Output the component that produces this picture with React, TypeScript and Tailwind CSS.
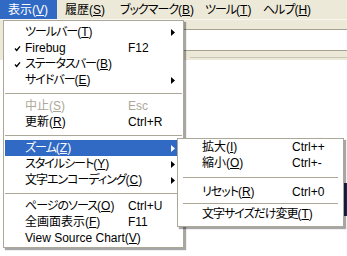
import React from 'react'

type Entry =
  | { kind: 'sep'; h?: string }
  | {
      kind: 'item'
      label: string
      mn: string
      shortcut?: string
      check?: boolean
      arrow?: boolean
      disabled?: boolean
      active?: boolean
    }

const font = { fontFamily: "'Liberation Sans','Noto Sans CJK JP',sans-serif", fontFeatureSettings: '"palt"' }

const mainMenu: Entry[] = [
  { kind: 'item', label: 'ツールバー', mn: 'T', arrow: true },
  { kind: 'item', label: 'Firebug', mn: '', shortcut: 'F12', check: true },
  { kind: 'item', label: 'ステータスバー', mn: 'B', check: true },
  { kind: 'item', label: 'サイドバー', mn: 'E', arrow: true },
  { kind: 'sep' },
  { kind: 'item', label: '中止', mn: 'S', shortcut: 'Esc', disabled: true },
  { kind: 'item', label: '更新', mn: 'R', shortcut: 'Ctrl+R' },
  { kind: 'sep' },
  { kind: 'item', label: 'ズーム', mn: 'Z', arrow: true, active: true },
  { kind: 'item', label: 'スタイルシート', mn: 'Y', arrow: true },
  { kind: 'item', label: '文字エンコーディング', mn: 'C', arrow: true },
  { kind: 'sep' },
  { kind: 'item', label: 'ページのソース', mn: 'O', shortcut: 'Ctrl+U' },
  { kind: 'item', label: '全画面表示', mn: 'F', shortcut: 'F11' },
  { kind: 'item', label: 'View Source Chart', mn: 'V' },
]

const zoomMenu: Entry[] = [
  { kind: 'item', label: '拡大', mn: 'I', shortcut: 'Ctrl++' },
  { kind: 'item', label: '縮小', mn: 'O', shortcut: 'Ctrl+-' },
  { kind: 'sep', h: 'h-[13px]' },
  { kind: 'item', label: 'リセット', mn: 'R', shortcut: 'Ctrl+0' },
  { kind: 'sep', h: 'h-[6px]' },
  { kind: 'item', label: '文字サイズだけ変更', mn: 'T' },
]

// kana labels are set tighter, like the narrow bitmap kana of the original
const hasKana = (s: string) => /[\u3040-\u30ff]/.test(s)

const Check = () => (
  <svg width="7" height="7" viewBox="0 0 7 7">
    <polyline points="1,3.6 2.7,5.4 6,1.4" fill="none" stroke="#000" strokeWidth="1.4" />
  </svg>
)

const Arrow = ({ white }: { white?: boolean }) => (
  <svg width="4" height="7" viewBox="0 0 4 7">
    <polygon points="0,0 4,3.5 0,7" fill={white ? '#fff' : '#000'} />
  </svg>
)

const Label = ({ label, mn }: { label: string; mn: string }) => (
  <span className="whitespace-nowrap">
    <span className={hasKana(label) ? 'tracking-[-1px]' : ''}>{label}</span>
    {mn && (
      <>
        (<u>{mn}</u>)
      </>
    )}
  </span>
)

const MenuList = ({ items, textX, keyX, sepInset }: { items: Entry[]; textX: string; keyX: string; sepInset: string }) => (
  <>
    {items.map((it, i) =>
      it.kind === 'sep' ? (
        <div key={i} className={`${it.h ?? 'h-[10px]'} flex items-center ${sepInset}`}>
          <div className="w-full border-t border-[#aca899]" />
        </div>
      ) : (
        <div
          key={i}
          className={`relative h-[16px] flex items-center ${it.active ? 'bg-[#316ac5] text-white' : ''} ${
            it.disabled ? 'text-[#aca899]' : ''
          }`}
        >
          <div className="w-[9px] shrink-0" />
          <div className="w-[11px] shrink-0 flex items-center">{it.check && <Check />}</div>
          <div className={`${textX} shrink-0`} />
          <div className={`${keyX} shrink-0`}>
            <Label label={it.label} mn={it.mn} />
          </div>
          <div className="flex-1 whitespace-nowrap">{it.shortcut}</div>
          <div className="w-[11px] shrink-0 flex items-center">{it.arrow && <Arrow white={it.active} />}</div>
        </div>
      )
    )}
  </>
)

const menuBar = [
  { label: '表示', mn: 'V', w: 'w-[57px]', active: true },
  { label: '履歴', mn: 'S', w: 'w-[55px]' },
  { label: 'ブックマーク', mn: 'B', w: 'w-[85px]' },
  { label: 'ツール', mn: 'T', w: 'w-[58px]' },
  { label: 'ヘルプ', mn: 'H', w: 'w-[60px]' },
]

export default function App() {
  return (
    <div className="relative w-[347px] h-[256px] overflow-hidden bg-white text-[12px] leading-[16px] text-black" style={font}>
      <div className="h-[20px] bg-[#ece9d8] flex border-b border-[#f7f6f0]">
        {menuBar.map((m) => (
          <div
            key={m.label}
            className={`${m.w} h-full flex items-center pl-[8px] ${m.active ? 'bg-[#316ac5] text-white' : ''}`}
          >
            <Label label={m.label} mn={m.mn} />
          </div>
        ))}
      </div>
      <div className="h-[40px] bg-[#ece9d8] flex flex-col">
        <div className="h-[9px]" />
        <div className="h-[22px] ml-[183px] bg-white border-y border-[#a5a291]" />
        <div className="h-[6px]" />
        <div className="ml-[190px] border-t border-[#c9c6b6]" />
      </div>
      <div className="pt-[123px] flex justify-end">
        <div className="w-[40px] h-[33px] bg-[#1c2a5c]" />
      </div>

      <div className="absolute left-[3px] top-[20px] w-[181px] bg-white border border-[#aca899] p-px pt-[3px] pb-[1px] shadow-[2px_2px_1px_rgba(0,0,0,0.35)]">
        <MenuList items={mainMenu} textX="w-0" keyX="w-[103px]" sepInset="" />
      </div>

      <div className="absolute left-[177px] top-[138px] w-[167px] bg-white border border-[#aca899] p-px pt-0 pb-[4px] shadow-[2px_2px_1px_rgba(0,0,0,0.35)]">
        <MenuList items={zoomMenu} textX="w-[3px]" keyX="w-[90px]" sepInset="mx-[4px]" />
      </div>
    </div>
  )
}
